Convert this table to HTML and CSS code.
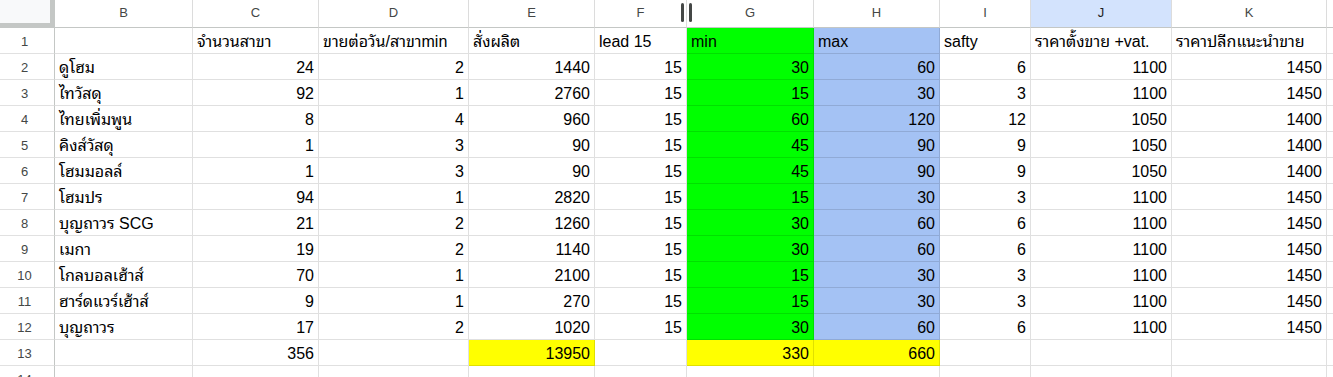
FILE: index.html
```html
<!DOCTYPE html>
<html lang="th">
<head>
<meta charset="utf-8">
<title>Sheet</title>
<link rel="stylesheet" href="styles.css">
</head>
<body>
<div class="sheet">
  <div class="corner"></div>
  <div class="ch">B</div><div class="ch">C</div><div class="ch">D</div><div class="ch">E</div><div class="ch">F</div><div class="ch">G</div><div class="ch">H</div><div class="ch">I</div><div class="ch sel">J</div><div class="ch">K</div><div class="ch"></div>

  <div class="rh">1</div><div class="c"></div><div class="c">จำนวนสาขา</div><div class="c">ขายต่อวัน/สาขาmin</div><div class="c">สั่งผลิต</div><div class="c">lead 15</div><div class="c g">min</div><div class="c b">max</div><div class="c">safty</div><div class="c">ราคาตั้งขาย +vat.</div><div class="c">ราคาปลีกแนะนำขาย</div><div class="c"></div>

  <div class="rh">2</div><div class="c">ดูโฮม</div><div class="c n">24</div><div class="c n">2</div><div class="c n">1440</div><div class="c n">15</div><div class="c n g">30</div><div class="c n b">60</div><div class="c n">6</div><div class="c n">1100</div><div class="c n">1450</div><div class="c"></div>

  <div class="rh">3</div><div class="c">ไทวัสดุ</div><div class="c n">92</div><div class="c n">1</div><div class="c n">2760</div><div class="c n">15</div><div class="c n g">15</div><div class="c n b">30</div><div class="c n">3</div><div class="c n">1100</div><div class="c n">1450</div><div class="c"></div>

  <div class="rh">4</div><div class="c">ไทยเพิ่มพูน</div><div class="c n">8</div><div class="c n">4</div><div class="c n">960</div><div class="c n">15</div><div class="c n g">60</div><div class="c n b">120</div><div class="c n">12</div><div class="c n">1050</div><div class="c n">1400</div><div class="c"></div>

  <div class="rh">5</div><div class="c">คิงส์วัสดุ</div><div class="c n">1</div><div class="c n">3</div><div class="c n">90</div><div class="c n">15</div><div class="c n g">45</div><div class="c n b">90</div><div class="c n">9</div><div class="c n">1050</div><div class="c n">1400</div><div class="c"></div>

  <div class="rh">6</div><div class="c">โฮมมอลล์</div><div class="c n">1</div><div class="c n">3</div><div class="c n">90</div><div class="c n">15</div><div class="c n g">45</div><div class="c n b">90</div><div class="c n">9</div><div class="c n">1050</div><div class="c n">1400</div><div class="c"></div>

  <div class="rh">7</div><div class="c">โฮมปร</div><div class="c n">94</div><div class="c n">1</div><div class="c n">2820</div><div class="c n">15</div><div class="c n g">15</div><div class="c n b">30</div><div class="c n">3</div><div class="c n">1100</div><div class="c n">1450</div><div class="c"></div>

  <div class="rh">8</div><div class="c">บุญถาวร SCG</div><div class="c n">21</div><div class="c n">2</div><div class="c n">1260</div><div class="c n">15</div><div class="c n g">30</div><div class="c n b">60</div><div class="c n">6</div><div class="c n">1100</div><div class="c n">1450</div><div class="c"></div>

  <div class="rh">9</div><div class="c">เมกา</div><div class="c n">19</div><div class="c n">2</div><div class="c n">1140</div><div class="c n">15</div><div class="c n g">30</div><div class="c n b">60</div><div class="c n">6</div><div class="c n">1100</div><div class="c n">1450</div><div class="c"></div>

  <div class="rh">10</div><div class="c">โกลบอลเฮ้าส์</div><div class="c n">70</div><div class="c n">1</div><div class="c n">2100</div><div class="c n">15</div><div class="c n g">15</div><div class="c n b">30</div><div class="c n">3</div><div class="c n">1100</div><div class="c n">1450</div><div class="c"></div>

  <div class="rh">11</div><div class="c">ฮาร์ดแวร์เฮ้าส์</div><div class="c n">9</div><div class="c n">1</div><div class="c n">270</div><div class="c n">15</div><div class="c n g">15</div><div class="c n b">30</div><div class="c n">3</div><div class="c n">1100</div><div class="c n">1450</div><div class="c"></div>

  <div class="rh">12</div><div class="c">บุญถาวร</div><div class="c n">17</div><div class="c n">2</div><div class="c n">1020</div><div class="c n">15</div><div class="c n g">30</div><div class="c n b">60</div><div class="c n">6</div><div class="c n">1100</div><div class="c n">1450</div><div class="c"></div>

  <div class="rh">13</div><div class="c"></div><div class="c n">356</div><div class="c"></div><div class="c n y">13950</div><div class="c"></div><div class="c n y">330</div><div class="c n y">660</div><div class="c"></div><div class="c"></div><div class="c"></div><div class="c"></div>

  <div class="rh">14</div><div class="c"></div><div class="c"></div><div class="c"></div><div class="c"></div><div class="c"></div><div class="c"></div><div class="c"></div><div class="c"></div><div class="c"></div><div class="c"></div><div class="c"></div>

  <div class="freeze"><span class="bar"></span><span class="bar"></span></div>
</div>
</body>
</html>
```

FILE: styles.css
```css
html, body {
  margin: 0;
  padding: 0;
  background: #ffffff;
  overflow: hidden;
}

.sheet {
  position: relative;
  display: grid;
  grid-template-columns: 55px 138px 126px 150px 126px 92px 127px 126px 91px 141px 155px 1fr;
  grid-template-rows: 28px repeat(14, 26px);
  width: 1333px;
  font-family: "Liberation Sans", Arial, Tahoma, "Noto Sans Thai Looped", "Loma", "Garuda", "Noto Sans Thai", sans-serif;
  color: #000000;
}

.sheet > div {
  box-sizing: border-box;
}

.corner {
  background: #f8f9fa;
  border-right: 1px solid #c4c7c5;
  border-bottom: 1px solid #c4c7c5;
  box-shadow: inset -4px -4px 0 #c4c7c5;
}

.ch {
  border-right: 1px solid #dcdcdc;
  border-bottom: 1px solid #c4c7c5;
  font-size: 13px;
  line-height: 26px;
  text-align: center;
  color: #444746;
  background: #ffffff;
}

.ch.sel {
  background: #d3e3fd;
  color: #1f1f1f;
}

.rh {
  border-right: 1px solid #c4c7c5;
  border-bottom: 1px solid #e1e1e1;
  font-size: 13px;
  line-height: 25px;
  padding-top: 1px;
  padding-right: 5px;
  text-align: center;
  color: #444746;
}

.c {
  border-right: 1px solid rgba(0, 0, 0, 0.12);
  border-bottom: 1px solid rgba(0, 0, 0, 0.12);
  font-size: 16px;
  line-height: 18px;
  padding: 5px 4px 2px 4px;
  white-space: nowrap;
  overflow: hidden;
}

.n {
  text-align: right;
}

.g {
  background: #00ff00;
}

.b {
  background: #a4c2f4;
}

.y {
  background: #ffff00;
}

.freeze {
  position: absolute;
  left: 681px;
  top: 3px;
  display: flex;
  gap: 5px;
}

.bar {
  display: block;
  width: 3px;
  height: 19px;
  border-radius: 2px;
  background: #444746;
}
```
